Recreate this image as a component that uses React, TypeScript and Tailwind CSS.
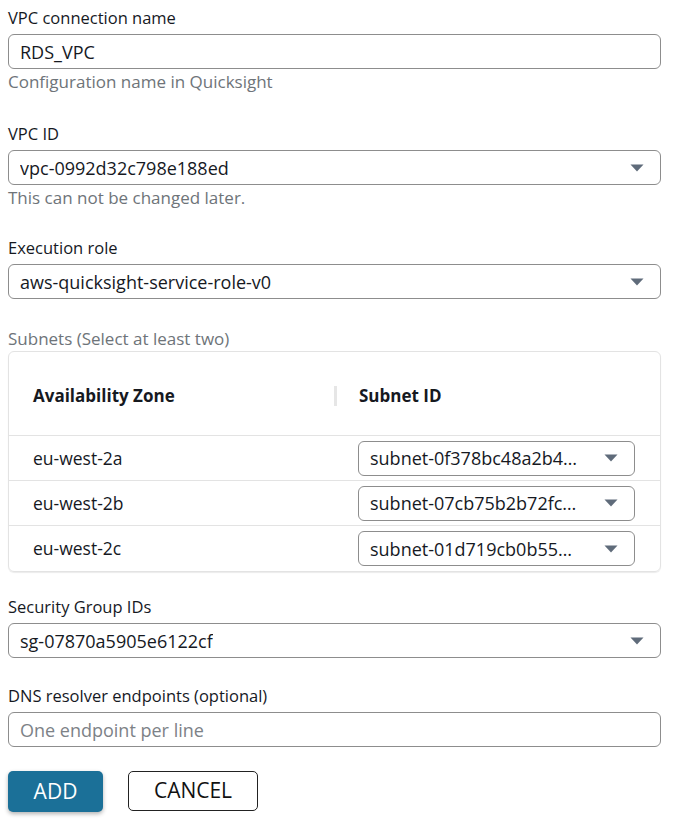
import React from "react";

const font = "font-['Open_Sans','Noto_Sans',sans-serif]";

const Caret = () => (
  <svg width="14" height="8" viewBox="0 0 14 8" className="shrink-0">
    <path d="M0.5 0.5h13l-6.5 7z" fill="#5f6b7a" />
  </svg>
);

const Select = ({ value, className = "" }: { value: string; className?: string }) => (
  <div
    className={`flex items-center justify-between h-[35px] rounded-[6px] border border-[#8d8d8d] bg-white pl-[11px] pr-[16px] ${className}`}
  >
    <span className={`${font} text-[18px] leading-[22px] text-[#16191f] truncate`}>{value}</span>
    <Caret />
  </div>
);

const Label = ({ children, muted }: { children: React.ReactNode; muted?: boolean }) => (
  <div
    className={`${font} leading-[20px] ${muted ? "text-[17px] text-[#6e7479] mb-[2px]" : "text-[16.5px] text-[#16191f] mb-[6px]"}`}
  >
    {children}
  </div>
);

const Hint = ({ children }: { children: React.ReactNode }) => (
  <div className={`${font} text-[17px] leading-[20px] text-[#6e7479] mt-[3px]`}>{children}</div>
);

const subnets = [
  { zone: "eu-west-2a", id: "subnet-0f378bc48a2b4…" },
  { zone: "eu-west-2b", id: "subnet-07cb75b2b72fc…" },
  { zone: "eu-west-2c", id: "subnet-01d719cb0b55…" },
];

export default function App() {
  return (
    <div className="w-[682px] h-[823px] bg-white pl-[8px] pt-[8px] pr-[21px]">
      {/* connection name */}
      <Label>VPC connection name</Label>
      <div className="h-[35px] rounded-[6px] border border-[#8d8d8d] flex items-center pl-[11px]">
        <span className={`${font} text-[18px] leading-[22px] text-[#16191f]`}>RDS_VPC</span>
      </div>
      <Hint>Configuration name in Quicksight</Hint>

      <div className="mt-[32px]">
        <Label>VPC ID</Label>
        <Select value="vpc-0992d32c798e188ed" />
        <Hint>This can not be changed later.</Hint>
      </div>

      <div className="mt-[30px]">
        <Label>Execution role</Label>
        <Select value="aws-quicksight-service-role-v0" />
      </div>

      <div className="mt-[30px]">
        <Label muted>Subnets (Select at least two)</Label>
        <div className="rounded-[6px] border border-[#e3e3e3] shadow-[0_1px_1px_rgba(0,0,0,0.08)]">
          <div className="grid grid-cols-[325px_1fr] h-[84px] pt-[4px] items-center border-b border-[#e3e3e3]">
            <div className={`${font} pl-[24px] font-bold text-[17px] text-[#16191f]`}>Availability Zone</div>
            <div className="flex items-center">
              <div className="w-[3px] h-[20px] bg-[#e6e6e6] mr-[22px]" />
              <span className={`${font} font-bold text-[17px] text-[#16191f]`}>Subnet ID</span>
            </div>
          </div>
          {subnets.map((s, i) => (
            <div
              key={s.zone}
              className={`grid grid-cols-[349px_277px] h-[45px] items-center ${i < 2 ? "border-b border-[#e3e3e3]" : ""}`}
            >
              <div className={`${font} pl-[24px] text-[17.5px] text-[#16191f]`}>{s.zone}</div>
              <Select value={s.id} className="pr-[12px]" />
            </div>
          ))}
        </div>
      </div>

      <div className="mt-[25px]">
        <Label>Security Group IDs</Label>
        <Select value="sg-07870a5905e6122cf" />
      </div>

      <div className="mt-[28px]">
        <Label>DNS resolver endpoints (optional)</Label>
        <div className="h-[35px] rounded-[6px] border border-[#8d8d8d] flex items-center pl-[11px]">
          <span className={`${font} text-[18px] leading-[22px] text-[#7d8287]`}>One endpoint per line</span>
        </div>
      </div>

      <div className="mt-[24px] flex gap-[25px]">
        <button
          className={`${font} w-[95px] h-[41px] rounded-[5px] bg-[#1b7098] text-white font-medium text-[21px] shadow-[0_2px_4px_rgba(0,0,0,0.3)]`}
        >
          ADD
        </button>
        <button
          className={`${font} w-[130px] h-[40px] rounded-[5px] border border-[#222] bg-white text-[#111] text-[21px]`}
        >
          CANCEL
        </button>
      </div>
    </div>
  );
}
